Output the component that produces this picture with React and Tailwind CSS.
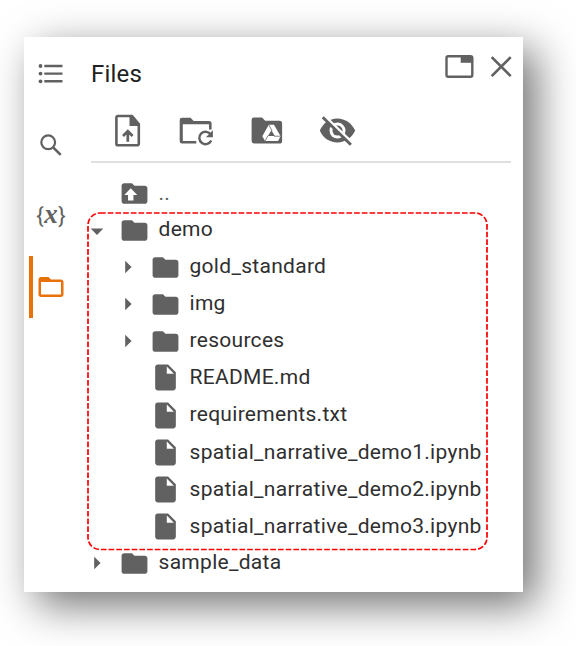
import React from "react";

function Folder({ up }) {
  return (
    <svg className="h-[31px] w-[31px] shrink-0" viewBox="0 0 24 24" fill="#616161">
      <path d="M10 4H4c-1.1 0-1.99.9-1.99 2L2 18c0 1.1.9 2 2 2h16c1.1 0 2-.9 2-2V8c0-1.1-.9-2-2-2h-8l-2-2z" />
      {up && <path d="M9.100 8l5 5.200h-2.900v4.200H7v-4.200H4.100z" fill="#fff" />}
    </svg>
  );
}

function FileIcon() {
  return (
    <svg className="h-[31px] w-[31px] shrink-0" viewBox="0 0 24 24" fill="#616161">
      <path d="M6 2c-1.1 0-1.99.9-1.99 2L4 20c0 1.1.89 2 1.99 2H18c1.1 0 2-.9 2-2V8l-6-6H6zm7 7V3.5L18.500 9H13z" />
    </svg>
  );
}

function Arrow({ open }) {
  return (
    <svg className="h-[14px] w-[14px] shrink-0" viewBox="0 0 14 14" fill="#616161">
      {open ? <path d="M.7 4.600h12.600L7 11z" /> : <path d="M4.200.7v12.600L10.600 7z" />}
    </svg>
  );
}

const rows = [
  { name: "..", kind: "up", h: "h-[37px]", shift: "-top-px" },
  { name: "demo", kind: "folder", open: true, h: "h-[37px]", shift: "-top-[2px]" },
  { name: "gold_standard", kind: "folder", nested: true, h: "h-[36px]", shift: "-top-px" },
  { name: "img", kind: "folder", nested: true, h: "h-[38px]", shift: "-top-px" },
  { name: "resources", kind: "folder", nested: true, h: "h-[36px]", shift: "-top-px" },
  { name: "README.md", kind: "file", nested: true, h: "h-[37px]", shift: "-top-px" },
  { name: "requirements.txt", kind: "file", nested: true, h: "h-[38px]", shift: "-top-px" },
  { name: "spatial_narrative_demo1.ipynb", kind: "file", nested: true, h: "h-[37px]", shift: "-top-px" },
  { name: "spatial_narrative_demo2.ipynb", kind: "file", nested: true, h: "h-[37px]", shift: "-top-px" },
  { name: "spatial_narrative_demo3.ipynb", kind: "file", nested: true, h: "h-[37px]", shift: "-top-px" },
  { name: "sample_data", kind: "folder", h: "h-[36px]", shift: "-top-px" },
];

function Row({ row }) {
  return (
    <li className={"flex items-center " + row.h + (row.nested ? " pl-[31px]" : "")}>
      <span className="w-[29px] shrink-0">
        {row.kind === "folder" && <Arrow open={row.open} />}
      </span>
      {row.kind === "file" ? <FileIcon /> : <Folder up={row.kind === "up"} />}
      <span
        className={
          "relative ml-[8.5px] whitespace-nowrap text-[21px] leading-[30px] tracking-[0.29px] " +
          row.shift +
          (row.kind === "up" ? " text-[#616161]" : " text-[#2f2f2f]")
        }
      >
        {row.name}
      </span>
    </li>
  );
}

function Sidebar() {
  return (
    <nav className="flex w-[53px] shrink-0 flex-col pl-[5px]">
      <div className="mt-[24px] flex h-[26px] items-center pl-[9px]">
        <svg className="h-[20px] w-[26px]" viewBox="0 0 26 20">
          <g fill="#616161">
            <circle cx="2.500" cy="2" r="1.900" />
            <circle cx="2.500" cy="9.600" r="1.900" />
            <circle cx="2.500" cy="17.300" r="1.900" />
            <path d="M6.300.8h18.200v2.400H6.300zM6.300 8.400h18.200v2.400H6.300zM6.300 16h18.200v2.400H6.300z" />
          </g>
        </svg>
      </div>
      <div className="mt-[45px] flex h-[26px] items-center pl-[9px]">
        <svg className="h-[24px] w-[24px]" viewBox="0 0 24 24" fill="none" stroke="#616161">
          <circle cx="10.200" cy="9.300" r="6.900" strokeWidth="2.200" />
          <path d="M15.100 14.300l7.600 7.600" strokeWidth="2.600" />
        </svg>
      </div>
      <div className="mt-[44px] flex h-[27px] w-[44px] items-center justify-center font-['Liberation_Serif',serif] leading-[25px] text-[#616161]">
        <span className="font-['Roboto',sans-serif] text-[22px]">{"{"}</span>
        <i className="mx-[0.5px] mb-[3px] text-[27px] font-bold">x</i>
        <span className="font-['Roboto',sans-serif] text-[22px]">{"}"}</span>
      </div>
      <div className="mt-[27px] flex h-[62px] items-center border-l-4 border-[#e8710a] pl-[3px]">
        <svg className="h-[30px] w-[30px]" viewBox="0 0 24 24" fill="#e8710a">
          <path d="M20 6h-8l-2-2H4c-1.100 0-1.990.9-1.990 2L2 18c0 1.100.9 2 2 2h16c1.100 0 2-.9 2-2V8c0-1.100-.9-2-2-2zm0 12H4V8h16v10z" />
        </svg>
      </div>
    </nav>
  );
}

function Toolbar() {
  return (
    <div className="flex h-[62px] items-center border-b-2 border-[#e0e0e0] pl-[22px]">
      <svg className="h-[36px] w-[29px]" viewBox="113 113 29 36">
        <path d="M118 116h14l6.800 8.200v19.300a1.800 1.800 0 0 1-1.800 1.800h-19a1.600 1.600 0 0 1-1.600-1.600v-26a1.600 1.600 0 0 1 1.600-1.700z" fill="none" stroke="#616161" strokeWidth="2.600" />
        <path d="M129.500 115.500h3l7.500 8.800v1.700h-10.500z" fill="#616161" />
        <path d="M127.800 141.800v-10.300M123 136l4.800-4.800 4.800 4.800" fill="none" stroke="#616161" strokeWidth="2.700" />
      </svg>
      <svg className="ml-[36px] h-[36px] w-[38px]" viewBox="178 113 38 36">
        <path d="M182 117.700h8.500l3.200 3.300H209a2.600 2.600 0 0 1 2.600 2.600v5.900H209v-5.300h-26.200v16.700h13.500v2.600H182a2.300 2.300 0 0 1-2.300-2.300V120a2.300 2.300 0 0 1 2.300-2.300z" fill="#616161" />
        <path d="M210.800 134.700a6.200 6.200 0 1 0 .4 5.800" fill="none" stroke="#616161" strokeWidth="2.400" />
        <path d="M212.900 130.300v7h-7z" fill="#616161" />
      </svg>
      <svg className="ml-[33px] h-[36px] w-[35px]" viewBox="249 113 35 36">
        <path d="M254 117.500h8l3.200 3.300h14.300a2.600 2.600 0 0 1 2.600 2.600v17.500a2.600 2.600 0 0 1-2.600 2.600H254a2.400 2.400 0 0 1-2.400-2.400v-21.200a2.400 2.400 0 0 1 2.400-2.400z" fill="#616161" />
        <path d="M268.800 124.800h5.200l6.600 11.400-2.600 4.700h-13l-2.700-4.700z" fill="#fff" />
        <path d="M271.400 130.300l3.400 5.700h-6.800z" fill="#616161" />
        <path d="M268.800 124.800l3.200 6M280.600 136.200h-6.600M265 140.900l3.200-5.400" fill="none" stroke="#616161" strokeWidth=".8" />
      </svg>
      <svg className="ml-[34px] h-[36px] w-[38px]" viewBox="318 113 38 36">
        <path d="M319.800 130.600c3-7.200 9.500-12.100 17.500-12.100s14.500 4.900 17.900 12.100c-3.400 7.200-9.900 11.900-17.900 11.900s-14.500-4.700-17.500-11.900z" fill="#616161" />
        <circle cx="337.500" cy="130.600" r="8" fill="#fff" />
        <circle cx="337.500" cy="130.600" r="5" fill="#616161" />
        <path d="M324 115.400l29 28" stroke="#fff" strokeWidth="2.700" />
        <path d="M322.700 117.300l28.200 27.400" stroke="#616161" strokeWidth="2.900" />
      </svg>
    </div>
  );
}

export default function App() {
  return (
    <div className="h-[646px] w-[576px] overflow-hidden bg-white pl-6 pt-[37px] font-['Roboto',sans-serif]">
      <div className="relative flex h-[555px] w-[498.500px] bg-white shadow-[13px_13px_40px_rgba(0,0,0,0.56)]">
        <Sidebar />
        <main className="flex w-[445px] flex-col pl-[14px] pr-[11px]">
          <header className="flex h-[64px] justify-between">
            <h1 className="mt-[22px] text-[24px] leading-[30px] tracking-[0.2px] text-[#212121]">Files</h1>
            <div className="-mr-[2px] flex pt-[17px]">
              <svg className="h-[26px] w-[30px]" viewBox="0 0 30 26">
                <rect x="1.500" y="2.300" width="25.800" height="20.500" rx="1.700" fill="none" stroke="#616161" strokeWidth="2.400" />
                <path d="M15.700 2h11v6.800h-11z" fill="#616161" />
              </svg>
              <svg className="ml-[14px] h-[26px] w-[24px]" viewBox="0 0 24 26" fill="none" stroke="#616161" strokeWidth="2.700">
                <path d="M2.700 3.100l19 19M21.700 3.100l-19 19" />
              </svg>
            </div>
          </header>
          <Toolbar />
          <ul className="-ml-px mt-[12px]">
            {rows.map((row) => (
              <Row key={row.name} row={row} />
            ))}
          </ul>
        </main>
        <svg className="pointer-events-none absolute left-[62px] top-[174px] h-[341px] w-[404px]" viewBox="0 0 404 341">
          <rect x="2" y="2" width="399" height="336.500" rx="12" fill="none" stroke="#ff0000" strokeWidth="1.700" strokeDasharray="5.700 2" />
        </svg>
      </div>
    </div>
  );
}
